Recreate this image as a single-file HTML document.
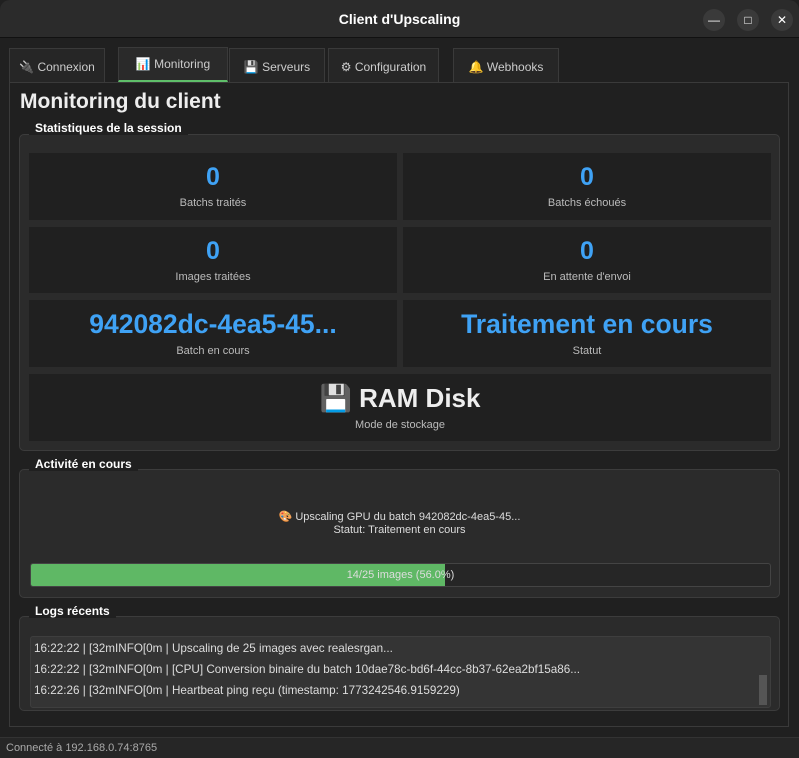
<!DOCTYPE html><html><head><style>
*{box-sizing:border-box;margin:0;padding:0}
body{width:799px;height:758px;background:#202020;font-family:"Liberation Sans","DejaVu Sans",sans-serif;color:#ddd;position:relative;overflow:hidden;font-size:12px}
.abs{position:absolute}
.title{left:0;top:0;width:799px;height:38px;background:#2b2b2b;border-bottom:1px solid #111;border-radius:10px 10px 0 0;text-align:center;line-height:38px;font-weight:bold;font-size:14px;color:#fff}
.btn{top:9px;width:22px;height:22px;border-radius:50%;background:#3a3a3a;color:#fff;text-align:center;line-height:22px;font-size:12px}
.tab{top:48px;height:34px;border:1px solid #3a3a3a;border-bottom:none;background:#262626;color:#ccc;text-align:center;line-height:36px;font-size:12px}
.pane{left:9px;top:82px;width:780px;height:645px;border:1px solid #3a3a3a}
.grp{border:1px solid #3c3c3c;background:#2b2b2b;border-radius:5px}
.gl{font-weight:bold;font-size:12px;color:#fff;background:#202020;padding:0 6px}
.card{background:#202020;text-align:center}
.num{color:#3fa2f5;font-weight:bold;font-size:25px}
.big{font-size:26.5px}
.lab{color:#bbb;font-size:11px}
.log{font-size:11.7px;color:#ddd;left:34px}
</style></head><body>
<div class="abs title">Client d'Upscaling</div>
<div class="abs btn" style="left:703px">&#8212;</div>
<div class="abs btn" style="left:737px">&#9633;</div>
<div class="abs btn" style="left:771px">&#10005;</div>
<div class="abs tab" style="left:9px;width:96px">🔌 Connexion</div>
<div class="abs tab" style="left:118px;width:110px;top:47px;line-height:32px;background:#2a2a2a;border-bottom:2px solid #5fbf6a;height:35px">📊 Monitoring</div>
<div class="abs tab" style="left:229px;width:96px">💾 Serveurs</div>
<div class="abs tab" style="left:328px;width:111px">⚙ Configuration</div>
<div class="abs tab" style="left:453px;width:106px">🔔 Webhooks</div>
<div class="abs pane"></div>
<div class="abs" style="left:20px;top:90px;font-size:21px;font-weight:bold;color:#eee">Monitoring du client</div>
<div class="abs grp" style="left:19px;top:134px;width:761px;height:317px"></div>
<div class="abs gl" style="left:29px;top:121px">Statistiques de la session</div>
<div class="abs card" style="left:29px;top:153px;width:368px;height:67px"><div class="num" style="margin-top:10px">0</div><div class="lab" style="margin-top:5px">Batchs traités</div></div>
<div class="abs card" style="left:403px;top:153px;width:368px;height:67px"><div class="num" style="margin-top:10px">0</div><div class="lab" style="margin-top:5px">Batchs échoués</div></div>
<div class="abs card" style="left:29px;top:227px;width:368px;height:66px"><div class="num" style="margin-top:10px">0</div><div class="lab" style="margin-top:5px">Images traitées</div></div>
<div class="abs card" style="left:403px;top:227px;width:368px;height:66px"><div class="num" style="margin-top:10px">0</div><div class="lab" style="margin-top:5px">En attente d'envoi</div></div>
<div class="abs card" style="left:29px;top:300px;width:368px;height:67px"><div class="num big" style="margin-top:9px">942082dc-4ea5-45...</div><div class="lab" style="margin-top:5px">Batch en cours</div></div>
<div class="abs card" style="left:403px;top:300px;width:368px;height:67px"><div class="num big" style="margin-top:9px">Traitement en cours</div><div class="lab" style="margin-top:5px">Statut</div></div>
<div class="abs card" style="left:29px;top:374px;width:742px;height:67px"><div style="margin-top:9px;font-size:26px;font-weight:bold;color:#eee">💾 RAM Disk</div><div class="lab" style="margin-top:5px">Mode de stockage</div></div>
<div class="abs grp" style="left:19px;top:469px;width:761px;height:129px"></div>
<div class="abs gl" style="left:29px;top:457px">Activité en cours</div>
<div class="abs" style="left:19px;top:511px;width:761px;text-align:center;font-size:11px;line-height:13px;color:#ddd">🎨 Upscaling GPU du batch 942082dc-4ea5-45...<br>Statut: Traitement en cours</div>
<div class="abs" style="left:30px;top:563px;width:741px;height:24px;border:1px solid #444;background:#262626;border-radius:3px;overflow:hidden"><div style="width:414px;height:100%;background:#5fb865"></div></div>
<div class="abs" style="left:30px;top:563px;width:741px;height:24px;line-height:24px;text-align:center;font-size:11px;color:#ddd">14/25 images (56.0%)</div>
<div class="abs grp" style="left:19px;top:616px;width:761px;height:95px"></div>
<div class="abs gl" style="left:29px;top:604px">Logs récents</div>
<div class="abs" style="left:30px;top:636px;width:741px;height:72px;background:#343434;border:1px solid #3e3e3e;border-radius:3px"></div>
<div class="abs" style="left:759px;top:675px;width:8px;height:30px;background:#555"></div>
<div class="abs log" style="top:642px">16:22:22 | [32mINFO[0m | Upscaling de 25 images avec realesrgan...</div>
<div class="abs log" style="top:663px">16:22:22 | [32mINFO[0m | [CPU] Conversion binaire du batch 10dae78c-bd6f-44cc-8b37-62ea2bf15a86...</div>
<div class="abs log" style="top:684px">16:22:26 | [32mINFO[0m | Heartbeat ping reçu (timestamp: 1773242546.9159229)</div>
<div class="abs" style="left:0;top:737px;width:799px;height:21px;background:#262626;border-top:1px solid #333;font-size:11px;color:#aaa;padding:4px 6px">Connecté à 192.168.0.74:8765</div>
</body></html>
